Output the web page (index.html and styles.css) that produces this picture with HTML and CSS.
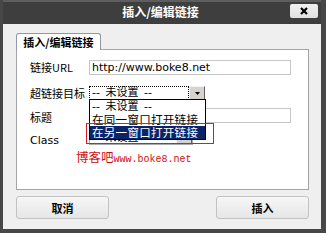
FILE: index.html
```html
<!DOCTYPE html>
<html>
<head>
<meta charset="utf-8">
<link rel="stylesheet" href="styles.css">
</head>
<body>
<div class="win">
  <div class="titlebar">
    <span></span>
    <span class="title">插入/编辑链接</span>
    <span class="close"><svg width="8" height="8" viewBox="0 0 8 8"><path d="M1 1L7 7M7 1L1 7" stroke="#000" stroke-width="2.2"/></svg></span>
  </div>
  <div class="content">
    <div class="tabs"><div class="tab">插入/编辑链接</div></div>
    <div class="panel">
      <div class="row r1">
        <span class="label">链接URL</span>
        <div class="input url">http://www.boke8.net</div>
      </div>
      <div class="row r2">
        <span class="label">超链接目标</span>
        <div class="select target"><span class="sel-text focus">-- 未设置 --</span><span class="arrow"><svg width="5" height="3" viewBox="0 0 5 3"><path d="M0 0H5L2.5 3Z" fill="#000"/></svg></span></div>
      </div>
      <div class="row r3">
        <span class="label">标题</span>
        <div class="input title-in"></div>
      </div>
      <div class="row r4">
        <span class="label">Class</span>
        <div class="select cls"><span class="sel-text">-- 未设置 --</span><span class="arrow"><svg width="5" height="3" viewBox="0 0 5 3"><path d="M0 0H5L2.5 3Z" fill="#000"/></svg></span></div>
      </div>
      <div class="mark"><span class="cjk">博客吧</span><span class="mono">www.boke8.net</span></div>
      <div class="listbox">
        <div class="item">-- 未设置 --</div>
        <div class="item zh">在同一窗口打开链接</div>
        <div class="item zh sel">在另一窗口打开链接</div>
      </div>
      <div class="redbox"></div>
    </div>
    <div class="buttons">
      <div class="btn">取消</div>
      <div class="btn">插入</div>
    </div>
  </div>
</div>
</body>
</html>
```
FILE: styles.css
```css
html, body {
  margin: 0;
  padding: 0;
  background: #6a6a6a;
}
body {
  font-family: "DejaVu Sans", "Noto Sans CJK SC", sans-serif;
  font-size: 11px;
  color: #000;
}
.win {
  width: 326px;
  height: 233px;
  box-sizing: border-box;
  background: #474747;
  padding: 0 5px 4px 3px;
  display: flex;
  flex-direction: column;
}
.titlebar {
  height: 24px;
  flex: none;
  display: grid;
  grid-template-columns: 1fr auto 1fr;
  align-items: center;
  background: #3e3e3e;
  border-top: 2px solid #5e5e5e;
  box-sizing: border-box;
  padding-right: 3px;
}
.title {
  color: #fff;
  font-weight: bold;
  font-size: 12px;
  font-family: "Noto Sans CJK SC", sans-serif;
  line-height: 14px;
  margin-top: -2px;
}
.close {
  justify-self: end;
  width: 28px;
  height: 14px;
  margin-top: -4px;
  background: linear-gradient(#f0f0f0, #e0e0e0);
  border-radius: 2px;
  display: flex;
  align-items: center;
  justify-content: center;
}
.content {
  flex: 1;
  background: #efefef;
  padding: 8px 12px 0 13px;
  display: flex;
  flex-direction: column;
}
.tabs {
  display: flex;
  height: 17px;
  flex: none;
}
.tab {
  width: 85px;
  box-sizing: border-box;
  background: #fff;
  border: 1px solid #8e99a6;
  border-bottom: none;
  border-radius: 3px 3px 0 0;
  font-family: "Noto Sans CJK SC", sans-serif;
  font-weight: bold;
  font-size: 11px;
  line-height: 16px;
  text-align: center;
  position: relative;
  top: 1px;
  z-index: 1;
}
.panel {
  position: relative;
  height: 141px;
  box-sizing: border-box;
  background: #fff;
  border: 1px solid #a4a4a4;
  padding: 10px 0 0 13px;
}
.row {
  display: flex;
  align-items: center;
}
.r1 { height: 15px; }
.r2 { height: 14px; margin-top: 11px; }
.r3 { height: 15px; margin-top: 8px; }
.r4 { height: 14px; margin-top: 8px; }
.label {
  width: 59px;
  flex: none;
  font-family: "Noto Sans CJK SC", "DejaVu Sans", sans-serif;
  line-height: 13px;
}
.r4 .label {
  font-family: "DejaVu Sans", sans-serif;
  margin-top: 5px;
}
.r3 .label { margin-top: 3px; }
.input {
  width: 202px;
  height: 15px;
  box-sizing: border-box;
  border: 1px solid #c6c6c6;
  background: #fff;
  padding-left: 2px;
  line-height: 13px;
  font-size: 11px;
  white-space: nowrap;
}
.select {
  height: 14px;
  display: flex;
  box-sizing: border-box;
}
.target { width: 116px; }
.cls { width: 104px; border: 1px solid #a9a9a9; }
.sel-text {
  flex: 1;
  box-sizing: border-box;
  padding-left: 2px;
  line-height: 12px;
  font-family: "DejaVu Sans", "Noto Sans CJK SC", sans-serif;
  white-space: nowrap;
  word-spacing: 2px;
}
.sel-text.focus {
  border: 1px dotted #000;
}
.arrow {
  width: 16px;
  flex: none;
  box-sizing: border-box;
  background: #d6d3ce;
  border: 1px solid;
  border-color: #f4f4f4 #606060 #606060 #f4f4f4;
  display: flex;
  align-items: center;
  justify-content: center;
}
.mark {
  margin-top: 3px;
  padding-left: 46px;
  color: #d10f0f;
  line-height: 17px;
  white-space: nowrap;
}
.mark .cjk {
  font-family: "Noto Sans CJK SC", sans-serif;
  font-size: 12.5px;
}
.mark .mono {
  font-family: "Liberation Mono", monospace;
  font-size: 10px;
}
.listbox {
  position: absolute;
  left: 72px;
  top: 49px;
  width: 117px;
  height: 41px;
  box-sizing: border-box;
  border: 1px solid #000;
  background: #fff;
  z-index: 2;
}
.item {
  height: 13px;
  line-height: 13px;
  padding-left: 2px;
  font-family: "DejaVu Sans", "Noto Sans CJK SC", sans-serif;
  font-size: 11px;
  white-space: nowrap;
  word-spacing: 2px;
}
.item.zh {
  font-family: "Noto Sans CJK SC", sans-serif;
  font-size: 11.5px;
  letter-spacing: 0.3px;
}
.item.sel {
  background: #0a246a;
  color: #fff;
}
.redbox {
  position: absolute;
  left: 69px;
  top: 73px;
  width: 128px;
  height: 21px;
  box-sizing: border-box;
  border: 1px solid #d42020;
  z-index: 3;
}
.buttons {
  margin-top: 6px;
  display: flex;
  justify-content: space-between;
}
.btn {
  width: 93px;
  height: 23px;
  box-sizing: border-box;
  border: 1px solid #c2c2c2;
  border-radius: 3px;
  background: linear-gradient(#f6f6f6, #e6e6e6);
  font-family: "Noto Sans CJK SC", sans-serif;
  font-weight: bold;
  font-size: 11px;
  display: flex;
  align-items: center;
  justify-content: center;
}
```
